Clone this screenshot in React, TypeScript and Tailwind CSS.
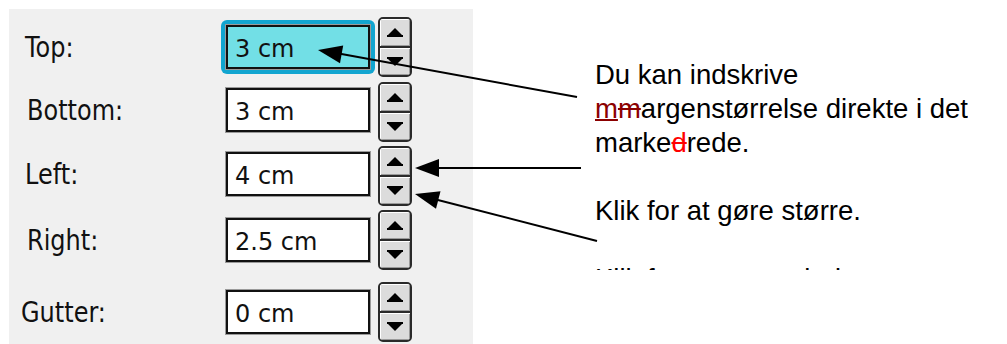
import React from "react";

type Row = { label: string; value: string; labelPl: string; mt: string; off: string; focused?: boolean };

const rows: Row[] = [
  { label: "Top:", value: "3 cm", labelPl: "pl-[16px]", mt: "mt-[8px]", off: "mt-[3px]", focused: true },
  { label: "Bottom:", value: "3 cm", labelPl: "pl-[18px]", mt: "mt-[5px]", off: "mt-[1px]" },
  { label: "Left:", value: "4 cm", labelPl: "pl-[16px]", mt: "mt-[4px]", off: "mt-[1px]" },
  { label: "Right:", value: "2.5 cm", labelPl: "pl-[18px]", mt: "mt-[4px]", off: "mt-[3px]" },
  { label: "Gutter:", value: "0 cm", labelPl: "pl-[12px]", mt: "mt-[12px]", off: "mt-[3px]" },
];

function Spinner() {
  return (
    <div className="w-[34px] h-[60px] rounded-[5px] border-2 border-[#2a2a2a] bg-[#dcdcdc] flex flex-col overflow-hidden">
      <div className="flex-1 flex items-center justify-center border-b-2 border-[#2a2a2a] shadow-[inset_1px_1px_0_#ffffff,inset_-1px_-1px_0_#9a9a9a]">
        <svg width="16" height="9" viewBox="0 0 16 9">
          <polygon points="8,0 16,8 0,8" fill="#000" />
          <rect x="0" y="7" width="16" height="2" fill="#000" />
        </svg>
      </div>
      <div className="flex-1 flex items-center justify-center shadow-[inset_1px_1px_0_#ffffff,inset_-1px_-1px_0_#9a9a9a]">
        <svg width="16" height="9" viewBox="0 0 16 9">
          <rect x="0" y="0" width="16" height="2" fill="#000" />
          <polygon points="0,1 16,1 8,9" fill="#000" />
        </svg>
      </div>
    </div>
  );
}

export default function App() {
  return (
    <div className="relative w-[1007px] h-[344px] overflow-hidden bg-white flex items-start">
      <div className="ml-[9px] mt-[9px] w-[464px] h-[335px] bg-[#f0f0f0] flex flex-col font-['DejaVu_Sans',sans-serif] text-[24px] text-[#111]">
        {rows.map((r) => (
          <div key={r.label} className={`flex items-start ${r.mt}`}>
            <div className={`w-[212px] h-[54px] ${r.off} ${r.labelPl} pt-[4px] flex items-center`}>
              <span className="inline-block scale-y-[1.15] origin-[50%_75%] leading-none">{r.label}</span>
            </div>
            <div
              className={`${r.off} w-[154px] h-[54px] p-[5px] rounded-[6px] ${
                r.focused ? "bg-[#12a5d0]" : "bg-transparent"
              }`}
            >
              <div
                className={`w-full h-full border-2 border-[#111] shadow-[0_0_0_1px_#9a9a9a] pl-[7px] pt-[4px] flex items-center ${
                  r.focused ? "bg-[#72dfe6]" : "bg-white"
                }`}
              >
                <span className="leading-none">{r.value}</span>
              </div>
            </div>
            <div className="ml-[3px]">
              <Spinner />
            </div>
          </div>
        ))}
      </div>

      <div className="ml-[122px] mt-[58px] h-[212px] overflow-hidden font-['Liberation_Sans',Arial,sans-serif] text-[27.5px] leading-[34px] text-black whitespace-nowrap">
        <div>Du kan indskrive</div>
        <div>
          <span className="text-[#8b0000] underline decoration-[2px]">m</span>
          <span className="text-[#8b0000] line-through">m</span>argenstørrelse direkte i det
        </div>
        <div>
          marke<span className="text-[#ff0000] line-through">d</span>rede.
        </div>
        <div>&nbsp;</div>
        <div>Klik for at gøre større.</div>
        <div>&nbsp;</div>
        <div>Klik for at gøre mindre.</div>
      </div>

      <svg className="absolute inset-0 pointer-events-none" width="1007" height="344" viewBox="0 0 1007 344">
        <line x1="577" y1="97" x2="336" y2="53" stroke="#000" strokeWidth="2" />
        <polygon points="318,50 340,63.2 343.2,45.4" fill="#000" />
        <line x1="581" y1="168" x2="436" y2="168" stroke="#000" strokeWidth="2" />
        <polygon points="415,168 439,159 439,177" fill="#000" />
        <line x1="597" y1="241" x2="434" y2="199" stroke="#000" strokeWidth="2" />
        <polygon points="415,194 436,208.7 440.5,191.3" fill="#000" />
      </svg>
    </div>
  );
}
